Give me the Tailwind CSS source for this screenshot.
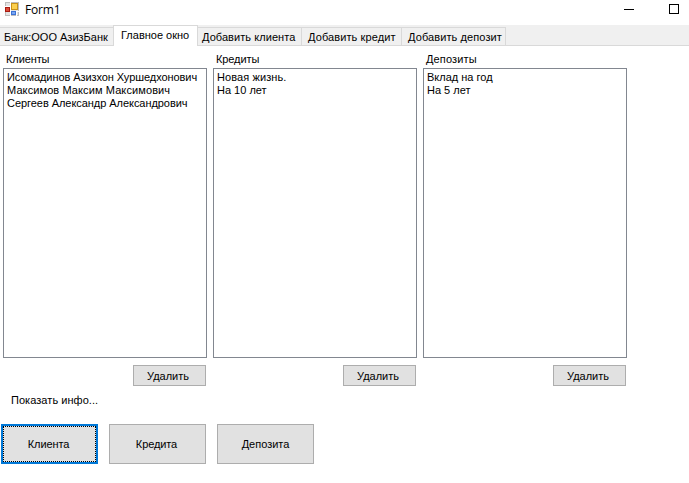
<!DOCTYPE html>
<html lang="ru">
<head>
<meta charset="utf-8">
<title>Form1</title>
<script src="https://cdn.jsdelivr.net/npm/@tailwindcss/browser@4"></script>
</head>
<body class="w-[689px] h-[483px] overflow-hidden bg-white text-black font-['Liberation_Sans',Arial,sans-serif] text-[11px] leading-[13px] whitespace-nowrap">
<header class="flex h-[25px] items-start pl-[5px]">
  <svg class="mt-[2px]" width="14" height="14" viewBox="0 0 14 14" shape-rendering="crispEdges">
    <rect x="0.5" y="0.5" width="13" height="13" fill="#e4e4e4" stroke="#bdbdbd"/>
    <path d="M5.5 0v14M0 4.5h6M0 9.5h14M11.5 9v5" stroke="#fff"/>
    <rect x="0" y="5" width="5" height="5" fill="#a81c12"/>
    <rect x="1" y="6" width="3" height="3" fill="#dc4a38"/>
    <rect x="6" y="1" width="7" height="7" fill="#c8921a"/>
    <rect x="7" y="2" width="5" height="5" fill="#fcd04e"/>
    <rect x="6" y="9" width="5" height="4" fill="#3c72d4"/>
    <rect x="7" y="10" width="3" height="2" fill="#7aa8f4"/>
  </svg>
  <h1 class="ml-[6px] mt-[2px] font-['Open_Sans',sans-serif] text-[12px] leading-[16px] tracking-[-0.15px]">Form1</h1>
  <div class="ml-auto flex h-[18px] items-center gap-[35px] pr-[10px]">
    <span class="h-px w-[10px] bg-black"></span>
    <span class="size-[10px] border border-black"></span>
  </div>
</header>
<nav class="flex h-[21px] items-end border-b border-[#d9d9d9] bg-[#f0f0f0]">
  <span class="h-[18px] w-[113px] border-t border-[#d9d9d9] pl-[4px] pt-[3px]">Банк:ООО АзизБанк</span>
  <span class="-mb-px h-[21px] w-[85px] border-x border-t border-[#d9d9d9] bg-white pl-[7px] pt-[3px]">Главное окно</span>
  <span class="h-[18px] w-[104px] border-r border-t border-[#d9d9d9] pl-[4px] pt-[3px] tracking-[0.06px]">Добавить клиента</span>
  <span class="h-[18px] w-[100px] border-r border-t border-[#d9d9d9] pl-[6px] pt-[3px] tracking-[0.1px]">Добавить кредит</span>
  <span class="h-[18px] w-[104px] border-r border-t border-[#d9d9d9] pl-[6px] pt-[3px] tracking-[0.1px]">Добавить депозит</span>
</nav>
<main>
  <div class="flex gap-[6px] pl-[3px] pt-[7px]">
    <section class="flex w-[204px] flex-col">
      <h2 class="mb-[2px] pl-[3px] tracking-[-0.1px]">Клиенты</h2>
      <ul class="h-[290px] border border-[#828790] pl-[3px] pt-[2px]">
        <li class="tracking-[-0.07px]">Исомадинов Азизхон Хуршедхонович</li>
        <li class="tracking-[0.1px]">Максимов Максим Максимович</li>
        <li class="tracking-[-0.05px]">Сергеев Александр Александрович</li>
      </ul>
      <button class="mr-px mt-[7px] h-[21px] w-[73px] self-end border border-[#adadad] bg-[#e1e1e1] pr-[3px] pt-px">Удалить</button>
    </section>
    <section class="flex w-[204px] flex-col">
      <h2 class="mb-[2px] pl-[3px] tracking-[-0.1px]">Кредиты</h2>
      <ul class="h-[290px] border border-[#828790] pl-[3px] pt-[2px]">
        <li class="tracking-[0.1px]">Новая жизнь.</li>
        <li>На 10 лет</li>
      </ul>
      <button class="mr-px mt-[7px] h-[21px] w-[73px] self-end border border-[#adadad] bg-[#e1e1e1] pr-[3px] pt-px">Удалить</button>
    </section>
    <section class="flex w-[204px] flex-col">
      <h2 class="mb-[2px] pl-[3px] tracking-[0.15px]">Депозиты</h2>
      <ul class="h-[290px] border border-[#828790] pl-[3px] pt-[2px]">
        <li>Вклад на год</li>
        <li>На 5 лет</li>
      </ul>
      <button class="mr-px mt-[7px] h-[21px] w-[73px] self-end border border-[#adadad] bg-[#e1e1e1] pr-[3px] pt-px">Удалить</button>
    </section>
  </div>
  <p class="mt-[8px] pl-[11px] tracking-[0.05px]">Показать инфо...</p>
  <div class="mt-[17px] flex gap-[11px] pl-px">
    <button class="h-[40px] w-[97px] border-2 border-[#0078d7] bg-[#e1e1e1]"><span class="flex size-full items-center justify-center border border-dotted border-black pr-[2px] tracking-[-0.1px]">Клиента</span></button>
    <button class="h-[40px] w-[97px] border border-[#adadad] bg-[#e1e1e1] pr-[2px] tracking-[-0.1px]">Кредита</button>
    <button class="h-[40px] w-[97px] border border-[#adadad] bg-[#e1e1e1]">Депозита</button>
  </div>
</main>
</body>
</html>
